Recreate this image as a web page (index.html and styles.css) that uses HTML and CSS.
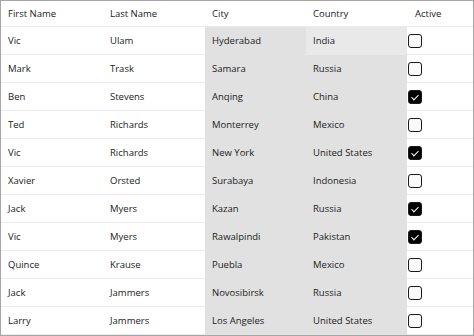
FILE: index.html
```html
<!DOCTYPE html>
<html>
<head>
<meta charset="utf-8">
<link rel="stylesheet" href="styles.css">
</head>
<body>
<div class="grid">
  <div class="row head">
    <div class="cell">First Name</div><div class="cell">Last Name</div><div class="cell">City</div><div class="cell">Country</div><div class="cell act">Active</div>
  </div>
  <div class="row"><div class="cell">Vic</div><div class="cell">Ulam</div><div class="cell sel">Hyderabad</div><div class="cell sel hov">India</div><div class="cell act"><span class="cb"></span></div></div>
  <div class="row"><div class="cell">Mark</div><div class="cell">Trask</div><div class="cell sel">Samara</div><div class="cell sel">Russia</div><div class="cell act"><span class="cb"></span></div></div>
  <div class="row"><div class="cell">Ben</div><div class="cell">Stevens</div><div class="cell sel">Anqing</div><div class="cell sel">China</div><div class="cell act"><span class="cb on"></span></div></div>
  <div class="row"><div class="cell">Ted</div><div class="cell">Richards</div><div class="cell sel">Monterrey</div><div class="cell sel">Mexico</div><div class="cell act"><span class="cb"></span></div></div>
  <div class="row"><div class="cell">Vic</div><div class="cell">Richards</div><div class="cell sel">New York</div><div class="cell sel">United States</div><div class="cell act"><span class="cb on"></span></div></div>
  <div class="row"><div class="cell">Xavier</div><div class="cell">Orsted</div><div class="cell sel">Surabaya</div><div class="cell sel">Indonesia</div><div class="cell act"><span class="cb"></span></div></div>
  <div class="row"><div class="cell">Jack</div><div class="cell">Myers</div><div class="cell sel">Kazan</div><div class="cell sel">Russia</div><div class="cell act"><span class="cb on"></span></div></div>
  <div class="row"><div class="cell">Vic</div><div class="cell">Myers</div><div class="cell sel">Rawalpindi</div><div class="cell sel">Pakistan</div><div class="cell act"><span class="cb on"></span></div></div>
  <div class="row"><div class="cell">Quince</div><div class="cell">Krause</div><div class="cell sel">Puebla</div><div class="cell sel">Mexico</div><div class="cell act"><span class="cb"></span></div></div>
  <div class="row"><div class="cell">Jack</div><div class="cell">Jammers</div><div class="cell sel">Novosibirsk</div><div class="cell sel">Russia</div><div class="cell act"><span class="cb"></span></div></div>
  <div class="row"><div class="cell">Larry</div><div class="cell">Jammers</div><div class="cell sel">Los Angeles</div><div class="cell sel">United States</div><div class="cell act"><span class="cb"></span></div></div>
</div>
</body>
</html>
```
FILE: styles.css
```css
html, body { margin: 0; padding: 0; background: #fff; }
body { width: 474px; height: 336px; overflow: hidden; }
.grid {
  box-sizing: border-box;
  width: 474px;
  height: 336px;
  border: 1px solid #a6a6a6;
  overflow: hidden;
  font-family: "Open Sans", "Noto Sans", sans-serif;
  font-size: 9.5px;
  color: #222;
}
.row {
  display: grid;
  grid-template-columns: 102px 102px 101px 101px 1fr;
  height: 28px;
  box-sizing: border-box;
}
.row.head { height: 26px; }
.cell {
  display: flex;
  align-items: center;
  padding-left: 7px;
  border-bottom: 1px solid #ebebeb;
  white-space: nowrap;
}
.sel { background: #e1e1e1; border-bottom-color: #e1e1e1; }
.hov { background: #e9e9e9; border-bottom-color: #e9e9e9; }
.act { padding-left: 1px; }
.head .act { padding-left: 8px; }
.cb {
  box-sizing: border-box;
  width: 14px;
  height: 14px;
  border: 1px solid #1a1a1a;
  border-radius: 3px;
  background: #fafafa;
  position: relative;
}
.cb.on { background: #000; }
.cb.on::after {
  content: "";
  position: absolute;
  left: 4px;
  top: 2px;
  width: 3px;
  height: 6px;
  border: solid #fff;
  border-width: 0 1px 1px 0;
  transform: rotate(45deg);
}
```
